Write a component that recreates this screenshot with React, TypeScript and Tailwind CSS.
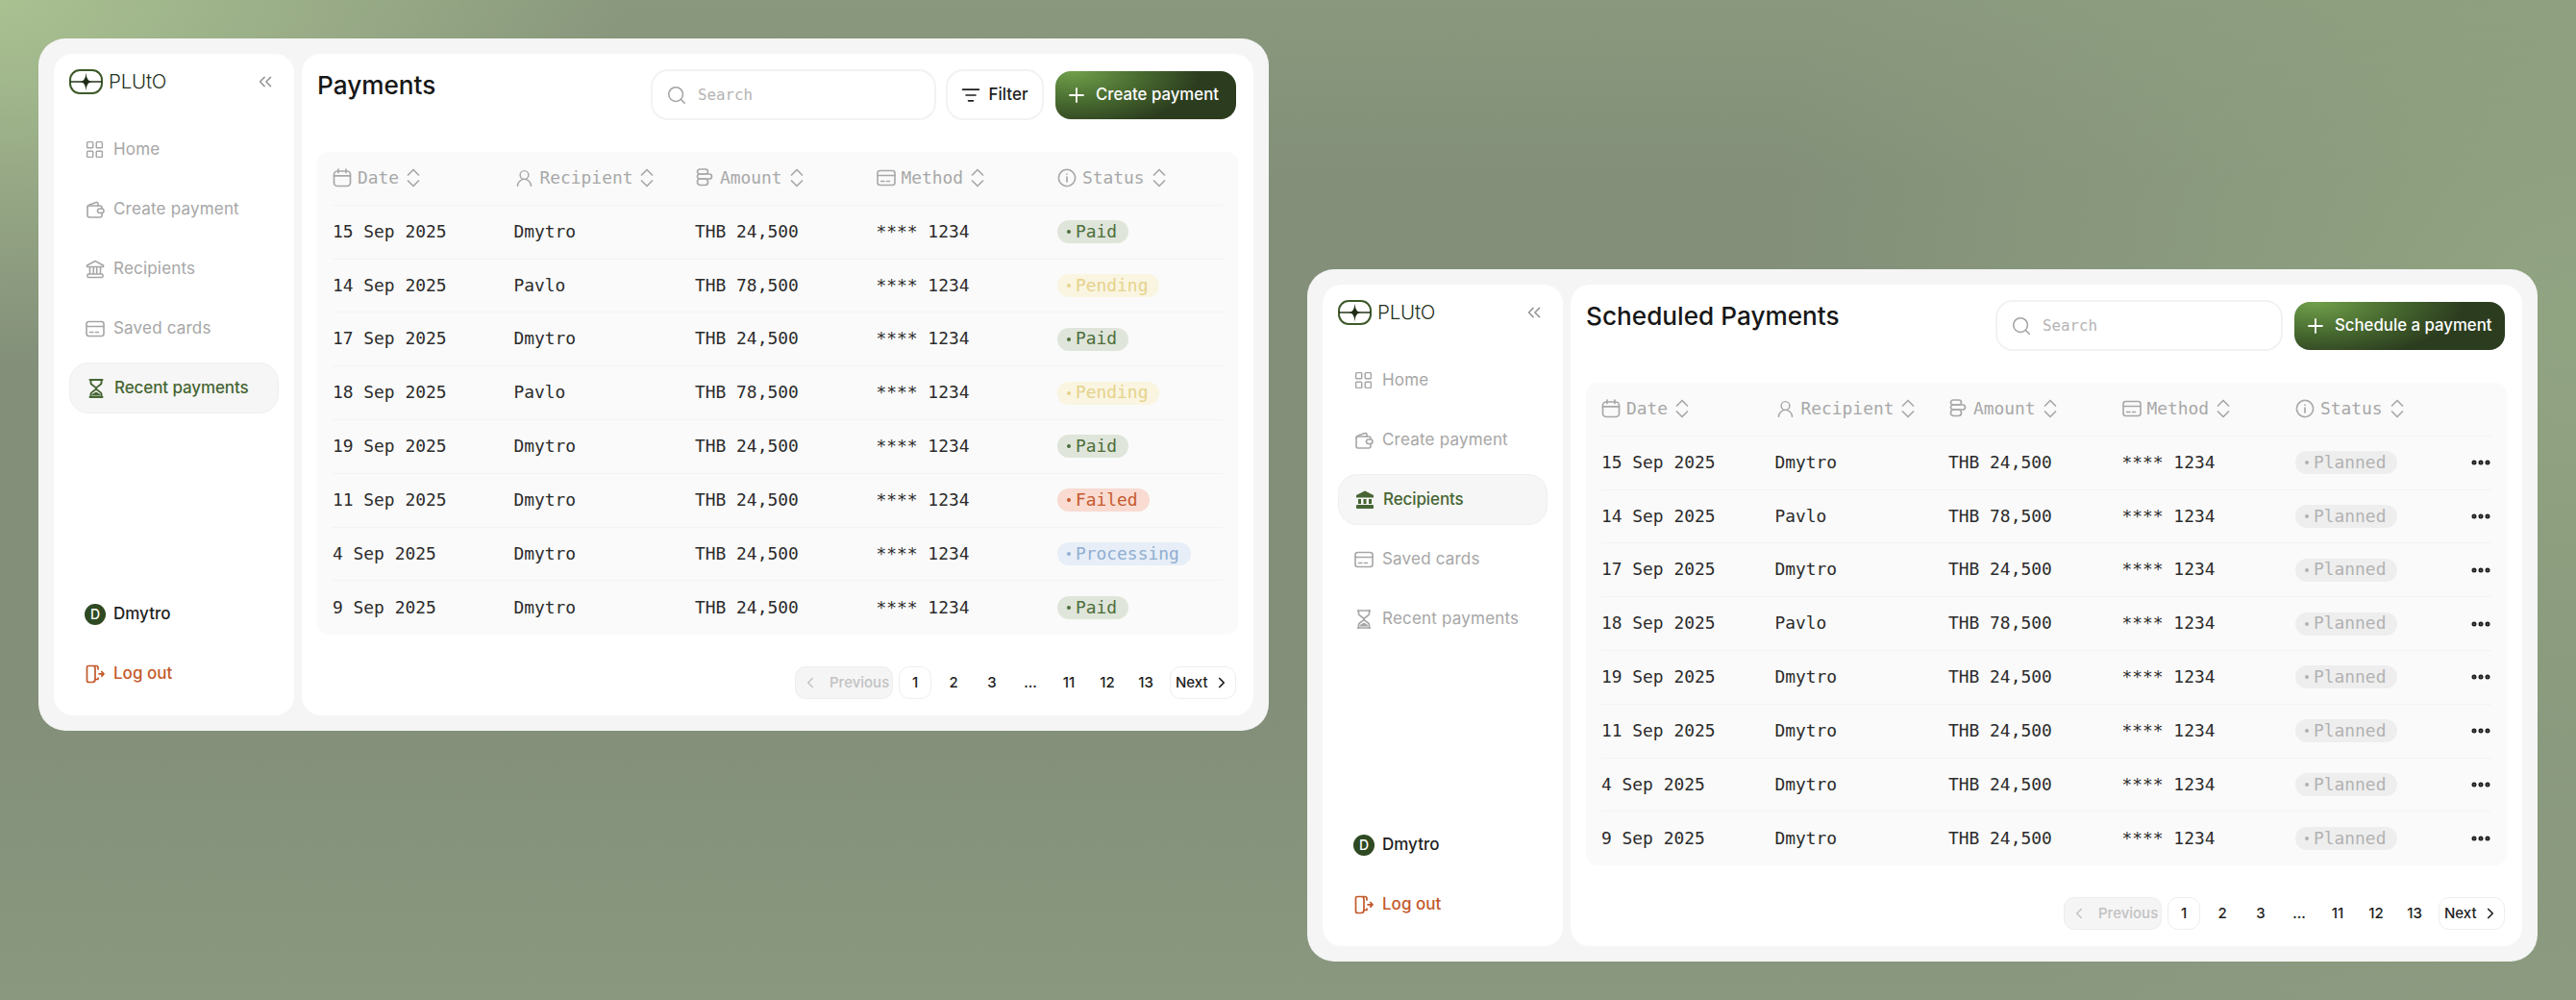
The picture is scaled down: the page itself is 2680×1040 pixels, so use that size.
import { ChevronLeft, ChevronRight, ChevronsLeft, Ellipsis, LayoutGrid, ListFilter, Plus, Search, UserRound } from "lucide-react";
import type { ReactNode } from "react";

type Status = "Paid" | "Pending" | "Failed" | "Processing" | "Planned";
type Row = { date: string; name: string; amount: string; status: Status };

const ROWS: Row[] = [
  { date: "15 Sep 2025", name: "Dmytro", amount: "THB 24,500", status: "Paid" },
  { date: "14 Sep 2025", name: "Pavlo", amount: "THB 78,500", status: "Pending" },
  { date: "17 Sep 2025", name: "Dmytro", amount: "THB 24,500", status: "Paid" },
  { date: "18 Sep 2025", name: "Pavlo", amount: "THB 78,500", status: "Pending" },
  { date: "19 Sep 2025", name: "Dmytro", amount: "THB 24,500", status: "Paid" },
  { date: "11 Sep 2025", name: "Dmytro", amount: "THB 24,500", status: "Failed" },
  { date: "4 Sep 2025", name: "Dmytro", amount: "THB 24,500", status: "Processing" },
  { date: "9 Sep 2025", name: "Dmytro", amount: "THB 24,500", status: "Paid" },
];

const STATUS_STYLES: Record<Status, string> = {
  Paid: "bg-[#dfe5da] text-[#4d6e3c]",
  Pending: "bg-[#f9f5e1] text-[#e6d28b]",
  Failed: "bg-[#f9dbd1] text-[#c65a2e]",
  Processing: "bg-[#e7eef7] text-[#90afd2]",
  Planned: "bg-[#eeeeee] text-[#b2b2b2]",
};

function CalendarIcon() {
  return (
    <svg width="20" height="20" viewBox="0 0 20 20" fill="none" stroke="currentColor" strokeWidth="1.7" strokeLinecap="round">
      <rect x="1.5" y="3" width="17" height="15.5" rx="3.5" />
      <path d="M1.5 7.8h17M6 1v3.5M14 1v3.5" />
    </svg>
  );
}

function CoinsIcon() {
  return (
    <svg width="20" height="20" viewBox="0 0 20 20" fill="none" stroke="currentColor" strokeWidth="1.7">
      <rect x="2.5" y="1" width="11" height="5" rx="2.5" />
      <rect x="2.5" y="6" width="15" height="5" rx="2.5" />
      <rect x="2.5" y="11" width="11" height="6.5" rx="3" />
    </svg>
  );
}

function CardIcon({ size = 20 }: { size?: number }) {
  return (
    <svg width={size} height={size} viewBox="0 0 20 20" fill="none" stroke="currentColor" strokeWidth="1.6" strokeLinecap="round">
      <rect x="1" y="2.5" width="18" height="15" rx="2.5" />
      <path d="M1 7.5h18M4.5 13.5h3.5M10.5 13.5h3" />
    </svg>
  );
}

function InfoIcon() {
  return (
    <svg width="20" height="20" viewBox="0 0 20 20" fill="none" stroke="currentColor" strokeWidth="1.7" strokeLinecap="round">
      <circle cx="10" cy="10" r="8.6" strokeDasharray="12 1.6" />
      <path d="M10 9v5M10 6v.1" />
    </svg>
  );
}

function SortIcon() {
  return (
    <svg width="14" height="20" viewBox="0 0 14 20" fill="none" stroke="currentColor" strokeWidth="1.7" strokeLinecap="round" strokeLinejoin="round">
      <path d="M1.5 7 7 1.5 12.5 7M1.5 13 7 18.500 12.5 13" />
    </svg>
  );
}

function WalletIcon() {
  return (
    <svg width="20" height="20" viewBox="0 0 20 20" fill="none" stroke="currentColor" strokeWidth="1.6" strokeLinecap="round" strokeLinejoin="round">
      <path d="M2 7.5c0-1.300.9-2.200 2-2.500l7-2.500c1-.3 2 .3 2 1.500V6" />
      <path d="M17 13.500V16a2 2 0 0 1-2 2H4a2 2 0 0 1-2-2V7.500A1.500 1.500 0 0 1 3.500 6H15a2 2 0 0 1 2 2v1" />
      <rect x="12.500" y="9" width="6.500" height="4.500" rx="2.250" />
    </svg>
  );
}

function BankIcon({ filled }: { filled?: boolean }) {
  if (filled) {
    return (
      <svg width="20" height="20" viewBox="0 0 20 20" fill="currentColor">
        <path d="M10 .5 19 5v2.500H1V5z" />
        <path d="M3 9h3v5H3zM8.500 9h3v5h-3zM14 9h3v5h-3z" />
        <rect x="1" y="15" width="18" height="4" rx="1" />
      </svg>
    );
  }
  return (
    <svg width="20" height="20" viewBox="0 0 20 20" fill="none" stroke="currentColor" strokeWidth="1.6" strokeLinejoin="round">
      <path d="M10 1.500 18.500 6v1.500h-17V6z" />
      <path d="M4.500 8v7M8.300 8v7M11.700 8v7M15.500 8v7" />
      <rect x="2" y="15" width="16" height="3.500" rx="1" />
    </svg>
  );
}

function HourglassIcon({ filled }: { filled?: boolean }) {
  return (
    <svg width="20" height="20" viewBox="0 0 20 20" fill="none" stroke="currentColor" strokeWidth={filled ? 2 : 1.7} strokeLinecap="round" strokeLinejoin="round">
      <path d="M3.500 1h13M3.500 19h13" />
      <path d="M4.500 1v3.500c0 2 5.500 3.500 5.500 5.500s-5.500 3.500-5.500 5.500V19M15.500 1v3.500c0 2-5.500 3.500-5.500 5.500s5.500 3.500 5.500 5.500V19" />
      <path d="M5.500 17.500c0-2 3-3 4.500-4 1.500 1 4.500 2 4.500 4z" fill="currentColor" stroke="none" />
    </svg>
  );
}

function LogoutIcon() {
  return (
    <svg width="20" height="20" viewBox="0 0 20 20" fill="none" stroke="currentColor" strokeWidth="1.7" strokeLinecap="round" strokeLinejoin="round">
      <path d="M13 5V3.500A2 2 0 0 0 11 1.500H3A1.500 1.500 0 0 0 1.500 3v13.500a2 2 0 0 0 2 2H7a3 3 0 0 0 3-3V4a2.500 2.500 0 0 0-2.500-2.500" />
      <path d="M10 15.500h3V14M14 9.800h5M16.800 7.500 19 9.800l-2.200 2.300" />
    </svg>
  );
}

function Logo() {
  return (
    <div className="flex items-center gap-[6px]">
      <svg width="35" height="26" viewBox="0 0 35 26" fill="none">
        <rect x="1" y="1" width="33" height="24" rx="10" stroke="#3d5a2a" strokeWidth="2" />
        <path d="M1 13h33" stroke="#24331a" strokeWidth="1.300" />
        <path d="M17.500 3.500c.6 6.800 2.300 8.900 6.500 9.500-4.200.6-5.900 2.700-6.500 9.500-.6-6.800-2.300-8.900-6.500-9.500 4.200-.6 5.900-2.700 6.500-9.500z" fill="#1f2d16" />
      </svg>
      <span className="font-['Inter',sans-serif] text-[20.500px] font-light leading-none tracking-[-0.2px] text-[#24301c]">PLUtO</span>
    </div>
  );
}

const NAV = [
  { label: "Home", icon: () => <LayoutGrid size={21} strokeWidth={1.7} /> },
  { label: "Create payment", icon: () => <WalletIcon /> },
  { label: "Recipients", icon: (on: boolean) => <BankIcon filled={on} /> },
  { label: "Saved cards", icon: () => <CardIcon /> },
  { label: "Recent payments", icon: (on: boolean) => <HourglassIcon filled={on} /> },
];

function Sidebar({ active }: { active: string }) {
  return (
    <aside className="flex w-[250px] shrink-0 flex-col rounded-[20px] bg-white p-4">
      <div className="flex h-[26px] items-center justify-between pr-[3px]">
        <Logo />
        <ChevronsLeft size={22} strokeWidth={1.700} className="text-[#969696]" />
      </div>
      <nav className="mt-[31px] flex flex-col gap-[9px]">
        {NAV.map((item) => {
          const on = item.label === active;
          return (
            <div
              key={item.label}
              className={`flex h-[53px] items-center gap-[9px] rounded-[20px] pl-4 text-[17px] ${
                on ? "border border-[#efefef] bg-[#f5f6f5] font-medium tracking-[-0.1px] text-[#476534]" : "tracking-[0.2px] text-[#a6a6a6]"
              }`}
            >
              <span className="flex w-[21px] justify-center">{item.icon(on)}</span>
              {item.label}
            </div>
          );
        })}
      </nav>
      <div className="mb-[1px] mt-auto flex flex-col gap-[9px]">
        <div className="flex h-[53px] items-center gap-2 pl-4 text-[17px] font-medium text-[#1e1e1e]">
          <span className="flex h-[22px] w-[22px] items-center justify-center rounded-full bg-[#2f4a22] text-[14px] text-white">D</span>
          Dmytro
        </div>
        <div className="flex h-[53px] items-center gap-[9px] pl-4 text-[17px] font-medium text-[#c4592b]">
          <span className="flex w-[21px] justify-center"><LogoutIcon /></span>
          Log out
        </div>
      </div>
    </aside>
  );
}

function HeaderCell({ icon, label }: { icon: ReactNode; label: string }) {
  return (
    <div className="flex items-center gap-[6px]">
      {icon}
      <span>{label}</span>
      <span className="ml-[2px]"><SortIcon /></span>
    </div>
  );
}

function StatusPill({ status }: { status: Status }) {
  return (
    <span className={`inline-flex h-6 items-center gap-[5px] self-center rounded-full pl-[10px] pr-3 ${STATUS_STYLES[status]}`}>
      <span className="h-1 w-1 rounded-full bg-current" />
      {status}
    </span>
  );
}

function PaymentsTable({ grid, planned }: { grid: string; planned?: boolean }) {
  return (
    <div className="rounded-xl bg-[#fafafa] font-['DejaVu_Sans_Mono',monospace] text-[17.900px]">
      <div className={`mx-4 grid h-[55.800px] items-center border-b border-[#f3f3f3] text-[#a8a8a8] ${grid}`}>
        <HeaderCell icon={<CalendarIcon />} label="Date" />
        <HeaderCell icon={<UserRound size={21} strokeWidth={1.700} />} label="Recipient" />
        <HeaderCell icon={<CoinsIcon />} label="Amount" />
        <HeaderCell icon={<CardIcon />} label="Method" />
        <HeaderCell icon={<InfoIcon />} label="Status" />
      </div>
      {ROWS.map((row, i) => (
        <div
          key={i}
          className={`mx-4 grid h-[55.800px] items-center text-[#2b2b2b] ${grid} ${i < ROWS.length - 1 ? "border-b border-[#f3f3f3]" : ""}`}
        >
          <span>{row.date}</span>
          <span>{row.name}</span>
          <span>{row.amount}</span>
          <span>**** 1234</span>
          <div className="flex">
            <StatusPill status={planned ? "Planned" : row.status} />
          </div>
          {planned && <Ellipsis size={24} strokeWidth={3} className="justify-self-end text-[#1e1e1e]" />}
        </div>
      ))}
    </div>
  );
}

function Pagination() {
  return (
    <div className="mt-[33px] flex items-center justify-end gap-[6px] pr-[2px] text-[15px] font-medium text-[#1e1e1e]">
      <div className="flex h-[34px] w-[102px] items-center gap-[11px] rounded-[11px] border border-[#ededed] bg-[#f5f5f5] pl-[6px] text-[#c2c2c2]">
        <ChevronLeft size={18} strokeWidth={2} />
        Previous
      </div>
      {["1", "2", "3", "...", "11", "12", "13"].map((p) => (
        <div
          key={p}
          className={`flex h-[34px] w-[34px] items-center justify-center rounded-[11px] ${p === "1" ? "border border-[#eeeeee] bg-white" : ""}`}
        >
          {p}
        </div>
      ))}
      <div className="ml-[2px] flex h-[34px] w-[69px] items-center justify-between rounded-[11px] border border-[#eeeeee] bg-white pl-[5px] pr-[5px]">
        Next
        <ChevronRight size={18} strokeWidth={2.200} />
      </div>
    </div>
  );
}

function Window(props: {
  className: string;
  title: string;
  active: string;
  action: string;
  actionWidth: string;
  searchWidth: string;
  filter?: boolean;
  grid: string;
  planned?: boolean;
}) {
  return (
    <section className={`flex h-[720px] w-[1280px] shrink-0 gap-2 rounded-[28px] bg-[#f4f5f4] p-4 ${props.className}`}>
      <Sidebar active={props.active} />
      <main className="min-w-0 flex-1 rounded-[20px] bg-white p-4">
        <div className="flex h-[86px] items-start justify-between">
          <h1 className="text-[26.200px] font-medium leading-[34px] text-[#171717]">{props.title}</h1>
          <div className="flex items-center gap-[10px] pr-[2px]">
            <div className={`flex h-[53px] items-center gap-[11px] rounded-[18px] border-2 border-[#f2f2f2] bg-white pl-[14px] ${props.searchWidth}`}>
              <Search size={22} strokeWidth={1.700} className="text-[#a3a3a3]" />
              <span className="font-['DejaVu_Sans_Mono',monospace] text-[15.800px] text-[#b4b4b4]">Search</span>
            </div>
            {props.filter && (
              <div className="flex h-[53px] w-[102px] items-center justify-center gap-[8px] rounded-[18px] border-2 border-[#f2f2f2] bg-white text-[17px] font-medium text-[#1e1e1e]">
                <ListFilter size={20} strokeWidth={2} />
                Filter
              </div>
            )}
            <div className={`ml-[2px] flex h-[50px] items-center gap-2 rounded-[16px] bg-[radial-gradient(ellipse_70%_120%_at_10%_0%,#71a04b_0%,#47692f_55%,#2c3d1f_100%)] pl-[10px] text-[16.800px] font-medium text-white ${props.actionWidth}`}>
              <Plus size={24} strokeWidth={1.800} />
              {props.action}
            </div>
          </div>
        </div>
        <PaymentsTable grid={props.grid} planned={props.planned} />
        <Pagination />
      </main>
    </section>
  );
}

export default function App() {
  return (
    <div className="flex h-[1040px] w-[2680px] gap-10 overflow-hidden bg-[#838f79] bg-[radial-gradient(ellipse_650px_380px_at_0%_0%,#a9c191_0%,#a9c19100_100%),radial-gradient(ellipse_850px_900px_at_100%_32%,#91a482_0%,#91a48200_100%),linear-gradient(180deg,#94a78466_0%,#94a78400_18%,#8f9e8400_70%,#8f9e8499_100%)] p-10 font-['Inter',sans-serif]">
      <Window
        className=""
        title="Payments"
        active="Recent payments"
        action="Create payment"
        actionWidth="w-[188px]"
        searchWidth="w-[297px]"
        filter
        grid="grid-cols-[repeat(5,188.500px)]"
      />
      <Window
        className="mt-[240px]"
        title="Scheduled Payments"
        active="Recipients"
        action="Schedule a payment"
        actionWidth="w-[219px]"
        searchWidth="w-[299px]"
        grid="grid-cols-[repeat(5,180.500px)_1fr]"
        planned
      />
    </div>
  );
}
